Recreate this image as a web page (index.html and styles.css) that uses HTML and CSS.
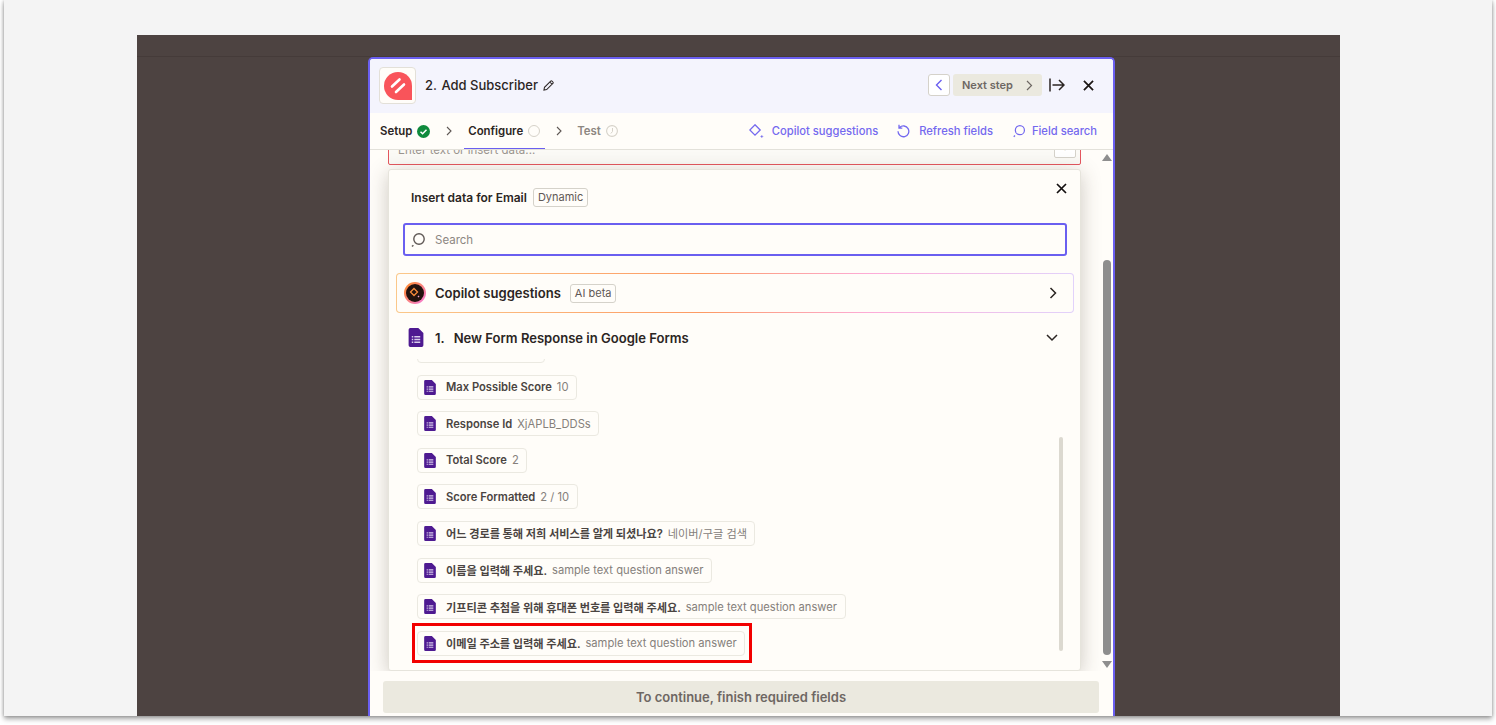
FILE: index.html
```html
<!DOCTYPE html>
<html lang="en">
<head>
<meta charset="utf-8">
<title>Add Subscriber</title>
<link rel="stylesheet" href="styles.css">
</head>
<body>
<svg class="defs" width="0" height="0" aria-hidden="true">
  <symbol id="forms" viewBox="0 0 14 18">
    <path d="M1.6 0H9.2L14 4.8V16.4A1.6 1.6 0 0 1 12.4 18H1.6A1.6 1.6 0 0 1 0 16.4V1.6A1.6 1.6 0 0 1 1.6 0Z" fill="#4e1a91"/>
    <path d="M3 7.6H4.4V9H3ZM5.4 7.6H11V9H5.4ZM3 10.2H4.4V11.6H3ZM5.4 10.2H11V11.6H5.4ZM3 12.8H4.4V14.2H3ZM5.4 12.8H11V14.2H5.4Z" fill="#d9cdeb"/>
  </symbol>
  <symbol id="search" viewBox="0 0 16 16">
    <circle cx="9" cy="7" r="5.2" fill="none" stroke="currentColor" stroke-width="1.4"/>
    <path d="M2 14.6l1.4-1.4" fill="none" stroke="currentColor" stroke-width="1.4"/>
  </symbol>
</svg>
<div class="frame">
  <div class="stage">
    <section class="panel">
      <header class="head">
        <div class="logo">
          <svg width="28" height="28" viewBox="0 0 28 28"><path d="M14 0A14 14 0 0 1 28 14V28H14A14 14 0 0 1 14 0Z" fill="#f9545a"/><path d="M8 14.5L15.5 7.5M12 20L20 12.5" stroke="#fff" stroke-width="2.6" stroke-linecap="round"/></svg>
        </div>
        <h1 class="title"><span>2.</span> Add Subscriber</h1>
        <svg class="pencil" width="11" height="11" viewBox="0 0 12 12"><path d="M1 11l.6-3L8.4 1.2a1 1 0 0 1 1.4 0l1 1a1 1 0 0 1 0 1.4L4 10.4ZM7.4 2.2l2.4 2.4" fill="none" stroke="#2b2523" stroke-width="1.1"/></svg>
        <div class="spacer"></div>
        <button class="prev"><svg width="8" height="12" viewBox="0 0 8 12"><path d="M6.5 1L1.5 6l5 5" fill="none" stroke="#6a5ff0" stroke-width="1.4"/></svg></button>
        <button class="next">Next step<svg width="7" height="11" viewBox="0 0 7 11"><path d="M1 1l4.5 4.5L1 10" fill="none" stroke="#6e6763" stroke-width="1.2"/></svg></button>
        <svg class="collapse" width="16" height="14" viewBox="0 0 16 14"><path d="M1 0.5V13.500M3.500 7H15M10 2l5 5-5 5" fill="none" stroke="#2b2523" stroke-width="1.500"/></svg>
        <svg class="close" width="11" height="11" viewBox="0 0 12 12"><path d="M1 1l10 10M11 1L1 11" stroke="#1c1614" stroke-width="1.900"/></svg>
      </header>
      <nav class="tabs">
        <span class="tab done">Setup</span>
        <svg class="tabicon" width="13" height="13" viewBox="0 0 13 13"><circle cx="6.500" cy="6.500" r="6.500" fill="#0f8a3c"/><path d="M3.500 6.700l2.100 2.100 3.900-4" fill="none" stroke="#fff" stroke-width="1.500"/></svg>
        <svg class="sep" width="7" height="10" viewBox="0 0 7 10"><path d="M1 1l4 4-4 4" fill="none" stroke="#5f5855" stroke-width="1.100"/></svg>
        <span class="tab active">Configure</span>
        <span class="ring"></span>
        <svg class="sep two" width="7" height="10" viewBox="0 0 7 10"><path d="M1 1l4 4-4 4" fill="none" stroke="#5f5855" stroke-width="1.100"/></svg>
        <span class="tab muted">Test</span>
        <svg class="tabicon" width="12" height="12" viewBox="0 0 12 12"><circle cx="6" cy="6" r="5.400" fill="none" stroke="#d6d2c9" stroke-width="1.100"/><path d="M6.500 3v3.500L4.800 8.500" fill="none" stroke="#d6d2c9" stroke-width="1"/></svg>
        <div class="spacer"></div>
        <a class="tool copilot-tool">
          <svg width="15" height="15" viewBox="0 0 15 15"><path d="M6 .8L11.200 6 6 11.200 .8 6Z" fill="none" stroke="currentColor" stroke-width="1.300"/><path d="M12.800 11.500l1 1-1 1-1-1Z" fill="currentColor" stroke="currentColor" stroke-width=".6"/></svg>
          Copilot suggestions</a>
        <a class="tool refresh-tool">
          <svg width="13" height="14" viewBox="0 0 13 14"><path d="M2.600 3.500A5.400 5.400 0 1 1 1 7.300M2 .8v3.300h3.300" fill="none" stroke="currentColor" stroke-width="1.300"/></svg>
          Refresh fields</a>
        <a class="tool search-tool">
          <svg width="14" height="14"><use href="#search"/></svg>
          Field search</a>
      </nav>
      <div class="body">
        <div class="main">
          <div class="field"><span>Enter text or insert data...</span><i class="plus">+</i></div>
          <div class="popup">
            <div class="pophead">
              <strong>Insert data for Email</strong><span class="tag">Dynamic</span>
              <svg class="popclose" width="11" height="11" viewBox="0 0 11 11"><path d="M1 1l9 9M10 1l-9 9" stroke="#141010" stroke-width="1.700"/></svg>
            </div>
            <label class="search">
              <svg width="16" height="16"><use href="#search"/></svg>
              <span>Search</span>
            </label>
            <div class="copilot">
              <svg width="22" height="22" viewBox="0 0 22 22"><defs><linearGradient id="cg" x1="0" y1="0" x2="1" y2="1"><stop offset="0" stop-color="#ff8a1f"/><stop offset="1" stop-color="#f57be0"/></linearGradient></defs><circle cx="11" cy="11" r="11" fill="url(#cg)"/><circle cx="11" cy="11" r="9" fill="#22120e"/><path d="M10 6.500L13.500 10 10 13.500 6.500 10Z" fill="none" stroke="#f98b3b" stroke-width="1.300"/><path d="M14.500 13.500l1 1-1 1-1-1Z" fill="#f2a0c8"/></svg>
              <b>Copilot suggestions</b><span class="tag">AI beta</span>
              <div class="spacer"></div>
              <svg class="chev" width="8" height="12" viewBox="0 0 8 12"><path d="M1.500 1l5 5-5 5" fill="none" stroke="#2b2523" stroke-width="1.500"/></svg>
            </div>
            <div class="section">
              <svg width="16" height="19"><use href="#forms"/></svg>
              <b><span class="num">1.</span>New Form Response in Google Forms</b>
              <div class="spacer"></div>
              <svg class="chev" width="12" height="8" viewBox="0 0 12 8"><path d="M1 1l5 5 5-5" fill="none" stroke="#2b2523" stroke-width="1.500"/></svg>
            </div>
            <div class="listwrap">
              <ul class="list">
                <li class="chip clipped"></li>
                <li class="chip"><svg width="12" height="15"><use href="#forms"/></svg><b>Max Possible Score</b><span>10</span></li>
                <li class="chip"><svg width="12" height="15"><use href="#forms"/></svg><b>Response Id</b><span>XjAPLB_DDSs</span></li>
                <li class="chip"><svg width="12" height="15"><use href="#forms"/></svg><b>Total Score</b><span>2</span></li>
                <li class="chip"><svg width="12" height="15"><use href="#forms"/></svg><b>Score Formatted</b><span>2 / 10</span></li>
                <li class="chip ko"><svg width="12" height="15"><use href="#forms"/></svg><b>어느 경로를 통해 저희 서비스를 알게 되셨나요?</b><span>네이버/구글 검색</span></li>
                <li class="chip ko"><svg width="12" height="15"><use href="#forms"/></svg><b>이름을 입력해 주세요.</b><span>sample text question answer</span></li>
                <li class="chip ko"><svg width="12" height="15"><use href="#forms"/></svg><b>기프티콘 추첨을 위해 휴대폰 번호를 입력해 주세요.</b><span>sample text question answer</span></li>
                <li class="chip ko marked"><svg width="12" height="15"><use href="#forms"/></svg><b>이메일 주소를 입력해 주세요.</b><span>sample text question answer</span></li>
              </ul>
              <div class="innerbar"></div>
            </div>
          </div>
        </div>
        <div class="scrollbar">
          <i class="arrow up"></i>
          <div class="track"><div class="thumb"></div></div>
          <i class="arrow down"></i>
        </div>
      </div>
      <footer class="foot"><button class="cta">To continue, finish required fields</button></footer>
    </section>
  </div>
</div>
</body>
</html>
```
FILE: styles.css
```css
* { box-sizing: border-box; }
html, body { margin: 0; height: 100%; overflow: hidden; }
body { background: #fff; font-family: Inter, "Noto Sans CJK KR", sans-serif; color: #2b2523; }
.defs { position: absolute; }
.spacer { flex: 1; }
.frame { margin-left: 4px; width: 1488px; height: 716px; padding: 35px 0 0 133px; background: #f4f4f4; box-shadow: 0 3px 5px rgba(0,0,0,.35), -1px 0 3px rgba(0,0,0,.12), 1px 0 3px rgba(0,0,0,.12); overflow: hidden; }
.stage { width: 1203px; height: 681px; padding: 22px 0 0 231px; background: #4d4341; box-shadow: inset 0 21px 0 #4d4341, inset 0 22px 0 #453b39; }
.panel { width: 747px; height: 659px; display: flex; flex-direction: column; background: #fffdf9; border: 2px solid #6a5ff0; border-bottom: 0; border-radius: 5px 5px 0 0; overflow: hidden; }

.head { flex: none; height: 54px; display: flex; align-items: center; padding: 0 19px 2px 9px; background: #f4f4fd; }
.logo { width: 37px; height: 37px; margin-top: 1px; display: flex; align-items: center; justify-content: center; background: #fffdf9; border: 1px solid #e3e0d8; border-radius: 4px; }
.title { margin: 0 0 0 9px; font-size: 13px; font-weight: 500; }
.title span { margin-right: 1px; }
.pencil { margin: 1px 0 0 5px; }
.prev { width: 22px; height: 22px; margin: 0; padding: 0; display: flex; align-items: center; justify-content: center; background: #fff; border: 1px solid #d5d2ca; border-radius: 3px; }
.next { width: 89px; height: 22px; margin: 0 0 0 3px; padding: 0 9px; display: flex; align-items: center; justify-content: space-between; background: #ebe9df; border: 0; border-radius: 3px; font: 600 11px Inter, sans-serif; color: #6e6763; }
.collapse { margin-left: 7px; }
.close { margin-left: 18px; }

.tabs { flex: none; height: 37px; display: flex; align-items: center; padding: 0 16px 0 10px; background: #fffdf9; border-bottom: 1px solid #e3e1da; position: relative; }
.tab { font-size: 11.400px; font-weight: 600; }
.tabicon { margin-left: 5px; }
.ring { width: 12px; height: 12px; margin-left: 5px; border: 1px solid #d6d2c9; border-radius: 50%; }
.sep { margin: 0 15px 0 16px; }
.sep.two { margin: 0 14px 0 16px; }
.muted { color: #8d8782; }
.active { position: relative; }
.active::after { content: ""; position: absolute; left: -4px; right: -22px; bottom: -11px; height: 1px; background: #6a5ff0; }
.tool { display: flex; align-items: center; margin-left: 19px; font-size: 11.200px; font-weight: 500; color: #7469ef; }
.copilot-tool { gap: 8px; }
.refresh-tool { gap: 9px; }
.search-tool { gap: 6px; }

.body { flex: 1; min-height: 0; display: flex; overflow: hidden; position: relative; }
.main { width: 711px; padding: 0 0 0 18px; display: flex; flex-direction: column; }
.field { flex: none; width: 693px; height: 30px; margin-top: -15px; padding: 0 4px 0 9px; display: flex; align-items: center; justify-content: space-between; border: 1px solid #e4575f; border-radius: 2px; font-size: 11.500px; color: #9a948e; background: #fbfaf6; }
.plus { width: 22px; height: 20px; margin-bottom: 4px; border: 1px solid #d5d2ca; border-radius: 2px; text-align: center; font-style: normal; line-height: 16px; background: #fff; }
.popup { flex: none; width: 693px; height: 502px; margin-top: 4px; background: #fffdf9; border: 1px solid #e6e4dc; border-radius: 3px; box-shadow: 0 4px 20px rgba(60,50,40,.26); display: flex; flex-direction: column; position: relative; }
.pophead { flex: none; height: 53px; padding: 1px 0 0 22px; display: flex; align-items: center; gap: 6px; font-size: 12px; position: relative; }
.pophead strong { font-weight: 600; }
.tag { padding: 0 4px; height: 19px; line-height: 17px; border: 1px solid #d5d2ca; border-radius: 3px; font-size: 11px; font-weight: 400; color: #5f5855; background: #fffdf9; }
.popclose { position: absolute; right: 13px; top: 13px; }
.search { flex: none; width: 664px; height: 33px; margin-left: 14px; padding: 0 0 0 5px; display: flex; align-items: center; gap: 9px; border: 2px solid #6a5ff0; border-radius: 3px; color: #5f5855; font-size: 11.500px; }
.search span { color: #8d8782; }
.copilot { flex: none; width: 678px; height: 40px; margin: 17px 0 0 7px; padding: 0 16px 0 7px; display: flex; align-items: center; border: 1px solid transparent; border-radius: 4px; background: linear-gradient(#fffdf9,#fffdf9) padding-box, linear-gradient(90deg,#fbc88a 0%,#fd9a63 45%,#fdabd8 70%,#e2d2fb 100%) border-box; }
.copilot b { margin-left: 9px; font-size: 13.050px; font-weight: 600; }
.copilot .tag { margin-left: 9px; }
.section { flex: none; height: 46px; padding: 3px 22px 0 19px; display: flex; align-items: center; }
.section b { margin-left: 11px; font-size: 13.050px; font-weight: 600; }
.num { margin-right: 9px; }
.listwrap { flex: 1; min-height: 0; position: relative; overflow: hidden; }
.list { margin: -21px 0 0; padding: 0 0 0 28px; list-style: none; display: flex; flex-direction: column; align-items: flex-start; gap: 11.600px; }
.chip { flex: none; height: 25px; padding: 0 7.500px 0 6px; display: flex; align-items: center; border: 1px solid #ebe9e1; border-radius: 4px; font-size: 11.200px; white-space: nowrap; background: #fffdf9; position: relative; }
.chip b { margin-left: 10px; font-weight: 600; color: #4a4441; }
.chip span { margin-left: 5px; color: #85807b; }
.ko b { letter-spacing: -.07px; }
.clipped { width: 128px; }
.marked::after { content: ""; position: absolute; inset: -9px -8px -8px -6px; border: 3px solid #f20000; }
.innerbar { position: absolute; left: 670px; top: 78px; width: 4px; height: 214px; background: #dcd9d0; border-radius: 2px; }

.scrollbar { width: 33px; padding: 4px 0 0 20px; display: flex; flex-direction: column; align-items: center; }
.track { flex: 1; width: 8px; padding-top: 99px; }
.thumb { width: 8px; height: 395px; background: #8e8e8e; border-radius: 4px; }
.arrow { width: 0; height: 0; border-left: 5px solid transparent; border-right: 5px solid transparent; }
.up { border-bottom: 7px solid #8e8e8e; }
.down { border-top: 7px solid #8e8e8e; margin-bottom: 3px; }

.foot { flex: none; height: 45px; padding: 10px 15px 3px 13px; background: #fffdf9; }
.cta { width: 716px; height: 32px; display: block; padding: 0; border: 0; border-radius: 3px; background: #ebe9df; color: #6e6763; font: 600 13px Inter, sans-serif; }
```
